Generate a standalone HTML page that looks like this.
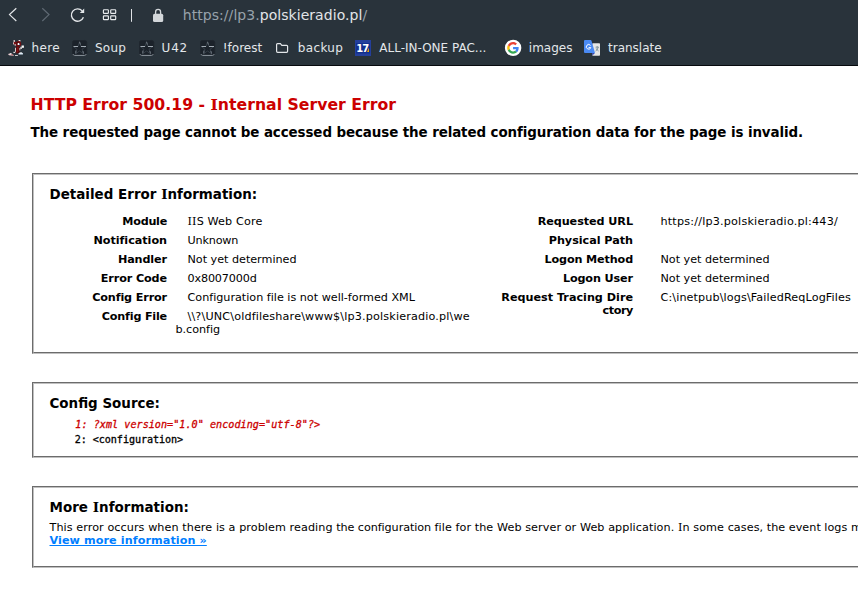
<!DOCTYPE html>
<html lang="en">
<head>
<meta charset="utf-8">
<title>IIS 10.0 Detailed Error - 500.19 - Internal Server Error</title>
<style>
html,body{margin:0;padding:0;}
html{width:858px;height:608px;overflow:hidden;background:#fff;}
body{width:858px;height:608px;overflow:hidden;position:relative;font-family:"DejaVu Sans","Liberation Sans",sans-serif;}
#chrome{position:absolute;left:0;top:0;width:858px;height:65px;background:#29333b;border-bottom:1px solid #070a0e;color:#e4e7ea;overflow:hidden;}
#chrome .t{position:absolute;white-space:nowrap;}
#chrome svg{position:absolute;left:0;top:0;overflow:visible;}
#url{left:182.8px;top:7.2px;font-size:14px;line-height:17px;color:#98a2ab;letter-spacing:0.05px;}
#url b{font-weight:normal;color:#e2e5e8;}
.bm{top:41px;font-size:12px;line-height:15px;color:#e3e7ea;}
#page{position:absolute;left:0;top:66px;width:1300px;font-size:11.2px;line-height:13px;font-family:"DejaVu Sans","Liberation Sans",sans-serif;color:#000;}
code{margin:0;font-weight:normal;-webkit-text-stroke:0.3px currentColor;font-family:"DejaVu Sans Mono","Liberation Mono",monospace;font-size:10.1px;color:#000;}
pre{margin:0 0 0 1.8px;position:relative;top:1px;font-size:10.1px;line-height:15px;font-family:"DejaVu Sans Mono","Liberation Mono",monospace;}
fieldset{padding:0 15px 10px 15px;border:2px groove #c0c0c0;margin:0 2px;min-width:0;}
a:link,a:visited{color:#007EFF;font-weight:bold;}
h3{font-size:15.68px;line-height:19px;margin:10px 0 0 0;color:#CC0000;white-space:nowrap;}
h4{font-size:13.44px;line-height:17px;margin:10px 0 5px 0;white-space:nowrap;}
#content{margin:0 0 0 20px;position:relative;}
.content-container{background:#FFF;width:1244px;margin-top:8px;padding:10px;position:relative;}
.content-container p{margin:0 0 10px 0;}
#details-left{width:422px;float:left;margin-right:24px;}
#details-right{width:760px;float:left;overflow:hidden;}
table{margin:4px 0 4px 0;width:100%;border:none;border-collapse:separate;border-spacing:0;table-layout:fixed;}
td,th{vertical-align:top;padding:3px 0;text-align:left;font-weight:normal;border:none;white-space:nowrap;}
th{text-align:right;font-weight:bold;}
td{text-indent:12px;}
#details-left th{width:118px;}
#details-left td{padding-left:8px;}
#details-right th{width:138px;}
#details-right td{padding-left:15px;}
.highlight-code{color:#CC0000;font-style:italic;}
.clear{clear:both;}
.I{font-family:"DejaVu Serif","Liberation Serif",serif;}
.nw{white-space:nowrap;letter-spacing:0.075px;}
h3,h4,.nw,p{position:relative;top:1px;left:.5px;}
th>span,td>span{position:relative;top:1px;}
td>span{left:.5px;}
</style>
</head>
<body>
<div id="chrome">
  <svg width="858" height="66" viewBox="0 0 858 66" fill="none">
    <!-- back / forward -->
    <polyline points="16.3,8.2 9.5,14.6 16.3,21" stroke="#e3e6e9" stroke-width="1.2"/>
    <polyline points="42.3,8.2 49,14.6 42.3,21" stroke="#5f6973" stroke-width="1.2"/>
    <!-- reload -->
    <path d="M82.2 10.85 A6.2 6.2 0 1 0 83.4 17.3" stroke="#e3e6e9" stroke-width="1.4"/>
    <path d="M84.2 8.6 V13 H79.8 Z" fill="#e3e6e9"/>
    <!-- grid -->
    <g stroke="#e9ecee" stroke-width="1.15">
      <rect x="103.4" y="9.7" width="5" height="3.7" rx="0.7"/>
      <rect x="110.7" y="9.7" width="5" height="3.7" rx="0.7"/>
      <rect x="103.4" y="15.9" width="5" height="3.7" rx="0.7"/>
      <rect x="110.7" y="15.9" width="5" height="3.7" rx="0.7"/>
    </g>
    <line x1="131.5" y1="9" x2="131.5" y2="21.8" stroke="#dfe2e5" stroke-width="1"/>
    <!-- daemon favicon -->
    <g transform="translate(8 40)">
      <rect x="5.6" y="0" width="1.2" height="2.6" fill="#f3dcdc"/>
      <rect x="5" y="2.4" width="1" height="2" fill="#f1e3e3"/>
      <rect x="5.8" y="2" width="2.6" height="2.4" fill="#7a1114"/>
      <rect x="6.6" y="4" width="1.6" height="1.6" fill="#e9caca"/>
      <rect x="10.6" y="0" width="1.8" height="1.6" fill="#f0dede"/>
      <rect x="7.6" y="1" width="5.6" height="5.6" rx="2.6" fill="#6f1013"/>
      <rect x="8.4" y="2" width="1.6" height="2.4" fill="#4a080b"/>
      <rect x="9.6" y="3.1" width="1.8" height="1.9" rx="0.6" fill="#ffffff"/>
      <rect x="11" y="3.9" width="1" height="1" fill="#5b93c7"/>
      <rect x="13.6" y="5.5" width="2.3" height="2.3" fill="#ffffff"/>
      <rect x="12.4" y="6.8" width="1.4" height="2.2" fill="#e8e0e0"/>
      <rect x="7.9" y="6.4" width="3.5" height="7" fill="#5e0c0f"/>
      <rect x="10.2" y="9" width="1.2" height="4" fill="#3d0709"/>
      <rect x="9.2" y="7" width="1.2" height="5" fill="#8a1518"/>
      <rect x="7" y="7.8" width="0.9" height="4" fill="#e9dede"/>
      <rect x="11.4" y="8" width="0.9" height="2.4" fill="#d9c4c4"/>
      <rect x="5.4" y="11.8" width="1.8" height="1.2" fill="#eadcdc"/>
      <rect x="10.6" y="13" width="4.3" height="1.5" fill="#d6e6f4"/>
      <rect x="11.5" y="12.4" width="2.6" height="0.8" fill="#ffffff"/>
      <rect x="1.9" y="13" width="1.7" height="0.9" fill="#f3eaea"/>
      <path d="M0 13.9 L1.6 13.6 L5.8 15 L5.6 15.8 L1 15.2 Z" fill="#e9cfd2"/>
      <rect x="3.4" y="14.4" width="1.6" height="1" fill="#b9565c"/>
      <rect x="7" y="15" width="2.9" height="0.8" fill="#f4f0f0"/>
    </g>
    <!-- default bookmark icons -->
    <g id="star1" transform="translate(72 40)">
      <rect x="0.5" y="0.5" width="14.2" height="15" rx="2" fill="#1b222a" stroke="#1f262e" stroke-width="1"/>
      <path d="M1 14.2 Q1.4 15.4 2.6 15.4 H12.6 Q13.8 15.4 14.2 14.2" stroke="#8e979f" stroke-width="1" fill="none"/>
      <path d="M7.5 1.8 L9 6.5 H13.9 L10 9.3 L11.5 13.8 L7.5 11 L3.5 13.8 L5 9.3 L1.2 6.5 H6 Z" stroke="#3c4650" stroke-width="0.8" fill="none"/>
      <path d="M7.5 1.8 L8.4 4.6 M3.8 10.6 V13.4 M10.9 11 L11.6 13.6" stroke="#7d868f" stroke-width="0.8" fill="none"/>
      <path d="M1.6 6.5 H6 M9 6.5 H14" stroke="#a2abb3" stroke-width="1"/>
    </g>
    <g transform="translate(139 40)">
      <rect x="0.5" y="0.5" width="14.2" height="15" rx="2" fill="#1b222a" stroke="#1f262e" stroke-width="1"/>
      <path d="M1 14.2 Q1.4 15.4 2.6 15.4 H12.6 Q13.8 15.4 14.2 14.2" stroke="#8e979f" stroke-width="1" fill="none"/>
      <path d="M7.5 1.8 L9 6.5 H13.9 L10 9.3 L11.5 13.8 L7.5 11 L3.5 13.8 L5 9.3 L1.2 6.5 H6 Z" stroke="#3c4650" stroke-width="0.8" fill="none"/>
      <path d="M7.5 1.8 L8.4 4.6 M3.8 10.6 V13.4 M10.9 11 L11.6 13.6" stroke="#7d868f" stroke-width="0.8" fill="none"/>
      <path d="M1.6 6.5 H6 M9 6.5 H14" stroke="#a2abb3" stroke-width="1"/>
    </g>
    <g transform="translate(200 40)">
      <rect x="0.5" y="0.5" width="14.2" height="15" rx="2" fill="#1b222a" stroke="#1f262e" stroke-width="1"/>
      <path d="M1 14.2 Q1.4 15.4 2.6 15.4 H12.6 Q13.8 15.4 14.2 14.2" stroke="#8e979f" stroke-width="1" fill="none"/>
      <path d="M7.5 1.8 L9 6.5 H13.9 L10 9.3 L11.5 13.8 L7.5 11 L3.5 13.8 L5 9.3 L1.2 6.5 H6 Z" stroke="#3c4650" stroke-width="0.8" fill="none"/>
      <path d="M7.5 1.8 L8.4 4.6 M3.8 10.6 V13.4 M10.9 11 L11.6 13.6" stroke="#7d868f" stroke-width="0.8" fill="none"/>
      <path d="M1.6 6.5 H6 M9 6.5 H14" stroke="#a2abb3" stroke-width="1"/>
    </g>
    <!-- folder -->
    <path d="M276.6 44.6 Q276.6 43.7 277.5 43.7 H280.4 L281.8 45.3 H286.6 Q287.6 45.3 287.6 46.3 V51.3 Q287.6 52.3 286.6 52.3 H277.6 Q276.6 52.3 276.6 51.3 Z" stroke="#e3e6e9" stroke-width="1.2" fill="none"/>
    <!-- 17 icon -->
    <rect x="355" y="40" width="16" height="16" fill="#243f9b"/>
    <rect x="356" y="43" width="14" height="10.5" fill="#12308f"/>
    <text x="356.3" y="52" font-family="'DejaVu Sans','Liberation Sans',sans-serif" font-weight="bold" font-size="10px" fill="#ffffff" letter-spacing="-1.1">17</text>
    <path d="M368.8 47.8 L369 52 H367 Z" fill="#f7b000"/>
    <!-- google -->
    <circle cx="513.1" cy="47.9" r="8.2" fill="#ffffff"/>
    <g transform="translate(507.2 42.05) scale(0.2438)">
      <path fill="#EA4335" d="M24 9.5c3.54 0 6.71 1.22 9.21 3.6l6.85-6.85C35.9 2.38 30.47 0 24 0 14.62 0 6.51 5.38 2.56 13.22l7.98 6.19C12.43 13.72 17.74 9.5 24 9.5z"/>
      <path fill="#4285F4" d="M46.98 24.55c0-1.57-.15-3.09-.38-4.55H24v9.02h12.94c-.58 2.96-2.26 5.48-4.78 7.18l7.73 6c4.51-4.18 7.09-10.36 7.09-17.65z"/>
      <path fill="#FBBC05" d="M10.53 28.59c-.48-1.45-.76-2.99-.76-4.59s.27-3.14.76-4.59l-7.98-6.19C.92 16.46 0 20.12 0 24c0 3.88.92 7.54 2.56 10.78l7.97-6.19z"/>
      <path fill="#34A853" d="M24 48c6.48 0 11.93-2.13 15.89-5.81l-7.73-6c-2.15 1.45-4.92 2.3-8.16 2.3-6.26 0-11.57-4.22-13.47-9.91l-7.98 6.19C6.51 42.62 14.62 48 24 48z"/>
    </g>
    <!-- translate -->
    <rect x="592.2" y="43.2" width="7.8" height="12.5" rx="0.8" fill="#e6e6e6"/>
    <path d="M592 53 H595 L592.4 55.4 Z" fill="#3949ab"/>
    <path d="M584 41 Q584 40 585 40 H590.6 Q591.3 40 591.5 40.7 L595 53 H585 Q584 53 584 52 Z" fill="#4a8af4"/>
    <path d="M590.5 45.5 A2.3 2.3 0 1 0 590.8 47.6 H588.6" stroke="#ffffff" stroke-width="1" fill="none"/>
    <path d="M595.6 47.2 H598.8 M597.2 46.2 V47.2 M598.2 47.4 Q597.6 49.8 595.6 51 M596.2 48.4 Q597 50.2 598.6 51" stroke="#5a7480" stroke-width="0.7" fill="none"/>
    <!-- lock -->
    <rect x="153" y="13.7" width="10.2" height="8.3" rx="1.6" fill="#d3d7da"/>
    <path d="M155.6 14 V12 A2.5 2.6 0 0 1 160.6 12 V14" stroke="#d3d7da" stroke-width="1.3"/>
  </svg>
  <span class="t" id="url">https://lp3.<b>polskieradio.pl</b>/</span>
  <span class="t bm" style="left:31.6px;letter-spacing:0.3px">here</span>
  <span class="t bm" style="left:95px;letter-spacing:0.25px">Soup</span>
  <span class="t bm" style="left:161.6px;letter-spacing:0.8px">U42</span>
  <span class="t bm" style="left:222.8px">!forest</span>
  <span class="t bm" style="left:297.8px;letter-spacing:0.35px">backup</span>
  <span class="t bm" style="left:379.3px">ALL-IN-ONE PAC...</span>
  <span class="t bm" style="left:528.8px">images</span>
  <span class="t bm" style="left:608px">translate</span>
</div>
<div id="page">
<div id="content">
<div class="content-container">
  <h3 style="letter-spacing:0.01px">HTTP Error 500.19 - <span class="I">I</span>nternal Server Error</h3>
  <h4 style="letter-spacing:-0.104px">The requested page cannot be accessed because the related configuration data for the page is invalid.</h4>
</div>
<div class="content-container">
 <fieldset><h4 style="letter-spacing:0.02px">Detailed Error <span class="I">I</span>nformation:</h4>
  <div id="details-left">
   <table border="0" cellpadding="0" cellspacing="0">
    <tr class="alt"><th><span style="letter-spacing:-0.26px">Module</span></th><td><span style="letter-spacing:0.13px"><span class="I">I</span><span class="I">I</span>S Web Core</span></td></tr>
    <tr><th><span style="letter-spacing:-0.03px">Notification</span></th><td><span style="letter-spacing:-0.17px">Unknown</span></td></tr>
    <tr class="alt"><th><span style="letter-spacing:-0.1px">Handler</span></th><td><span style="letter-spacing:-0.02px">Not yet determined</span></td></tr>
    <tr><th><span style="letter-spacing:-0.11px">Error Code</span></th><td><span style="letter-spacing:-0.15px">0x8007000d</span></td></tr>
    <tr><th><span style="letter-spacing:-0.13px">Config Error</span></th><td><span style="letter-spacing:-0.01px">Configuration file is not well-formed XML</span></td></tr>
    <tr><th><span style="letter-spacing:-0.2px">Config File</span></th><td><span><span style="letter-spacing:0.159px">\\?\UNC\oldfileshare\www$\lp3.polskieradio.pl\we</span><br><span style="letter-spacing:-0.03px">b.config</span></span></td></tr>
   </table>
  </div>
  <div id="details-right">
   <table border="0" cellpadding="0" cellspacing="0">
    <tr class="alt"><th><span style="letter-spacing:-0.06px">Requested URL</span></th><td><span style="letter-spacing:0.192px">https://lp3.polskieradio.pl:443/</span></td></tr>
    <tr><th><span style="letter-spacing:-0.03px">Physical Path</span></th><td><span>&nbsp;</span></td></tr>
    <tr class="alt"><th><span style="letter-spacing:-0.14px">Logon Method</span></th><td><span style="letter-spacing:-0.02px">Not yet determined</span></td></tr>
    <tr><th><span style="letter-spacing:-0.11px">Logon User</span></th><td><span style="letter-spacing:-0.02px">Not yet determined</span></td></tr>
    <tr class="alt"><th><span>Request Tracing Dire<br><span style="letter-spacing:-0.4px">ctory</span></span></th><td><span style="letter-spacing:0.111px">C:\inetpub\logs\FailedReqLogFiles</span></td></tr>
   </table>
   <div class="clear"></div>
  </div>
 </fieldset>
</div>
<div class="content-container">
 <fieldset><h4>Config Source:</h4>
  <div class="config_source"><pre><code><span class="highlight-code" style="letter-spacing:0.045px">    1: ?xml version="1.0" encoding="utf-8"?&gt;</span>
<span style="letter-spacing:-0.07px">    2: &lt;configuration&gt;</span></code></pre></div>
 </fieldset>
</div>
<div class="content-container">
 <fieldset><h4 style="letter-spacing:0.035px">More <span class="I">I</span>nformation:</h4>
  <div class="nw">This error occurs when there is a problem reading <span style="letter-spacing:-0.08px">the configuration </span>file for the Web server or Web application. <span class="I">I</span>n some cases, <span style="letter-spacing:0.02px">the event logs may</span> contain more information about what caused this error.</div>
  <p><a href="#" style="letter-spacing:0.079px">View more information &raquo;</a></p>
 </fieldset>
</div>
</div>
</div>
</body>
</html>
